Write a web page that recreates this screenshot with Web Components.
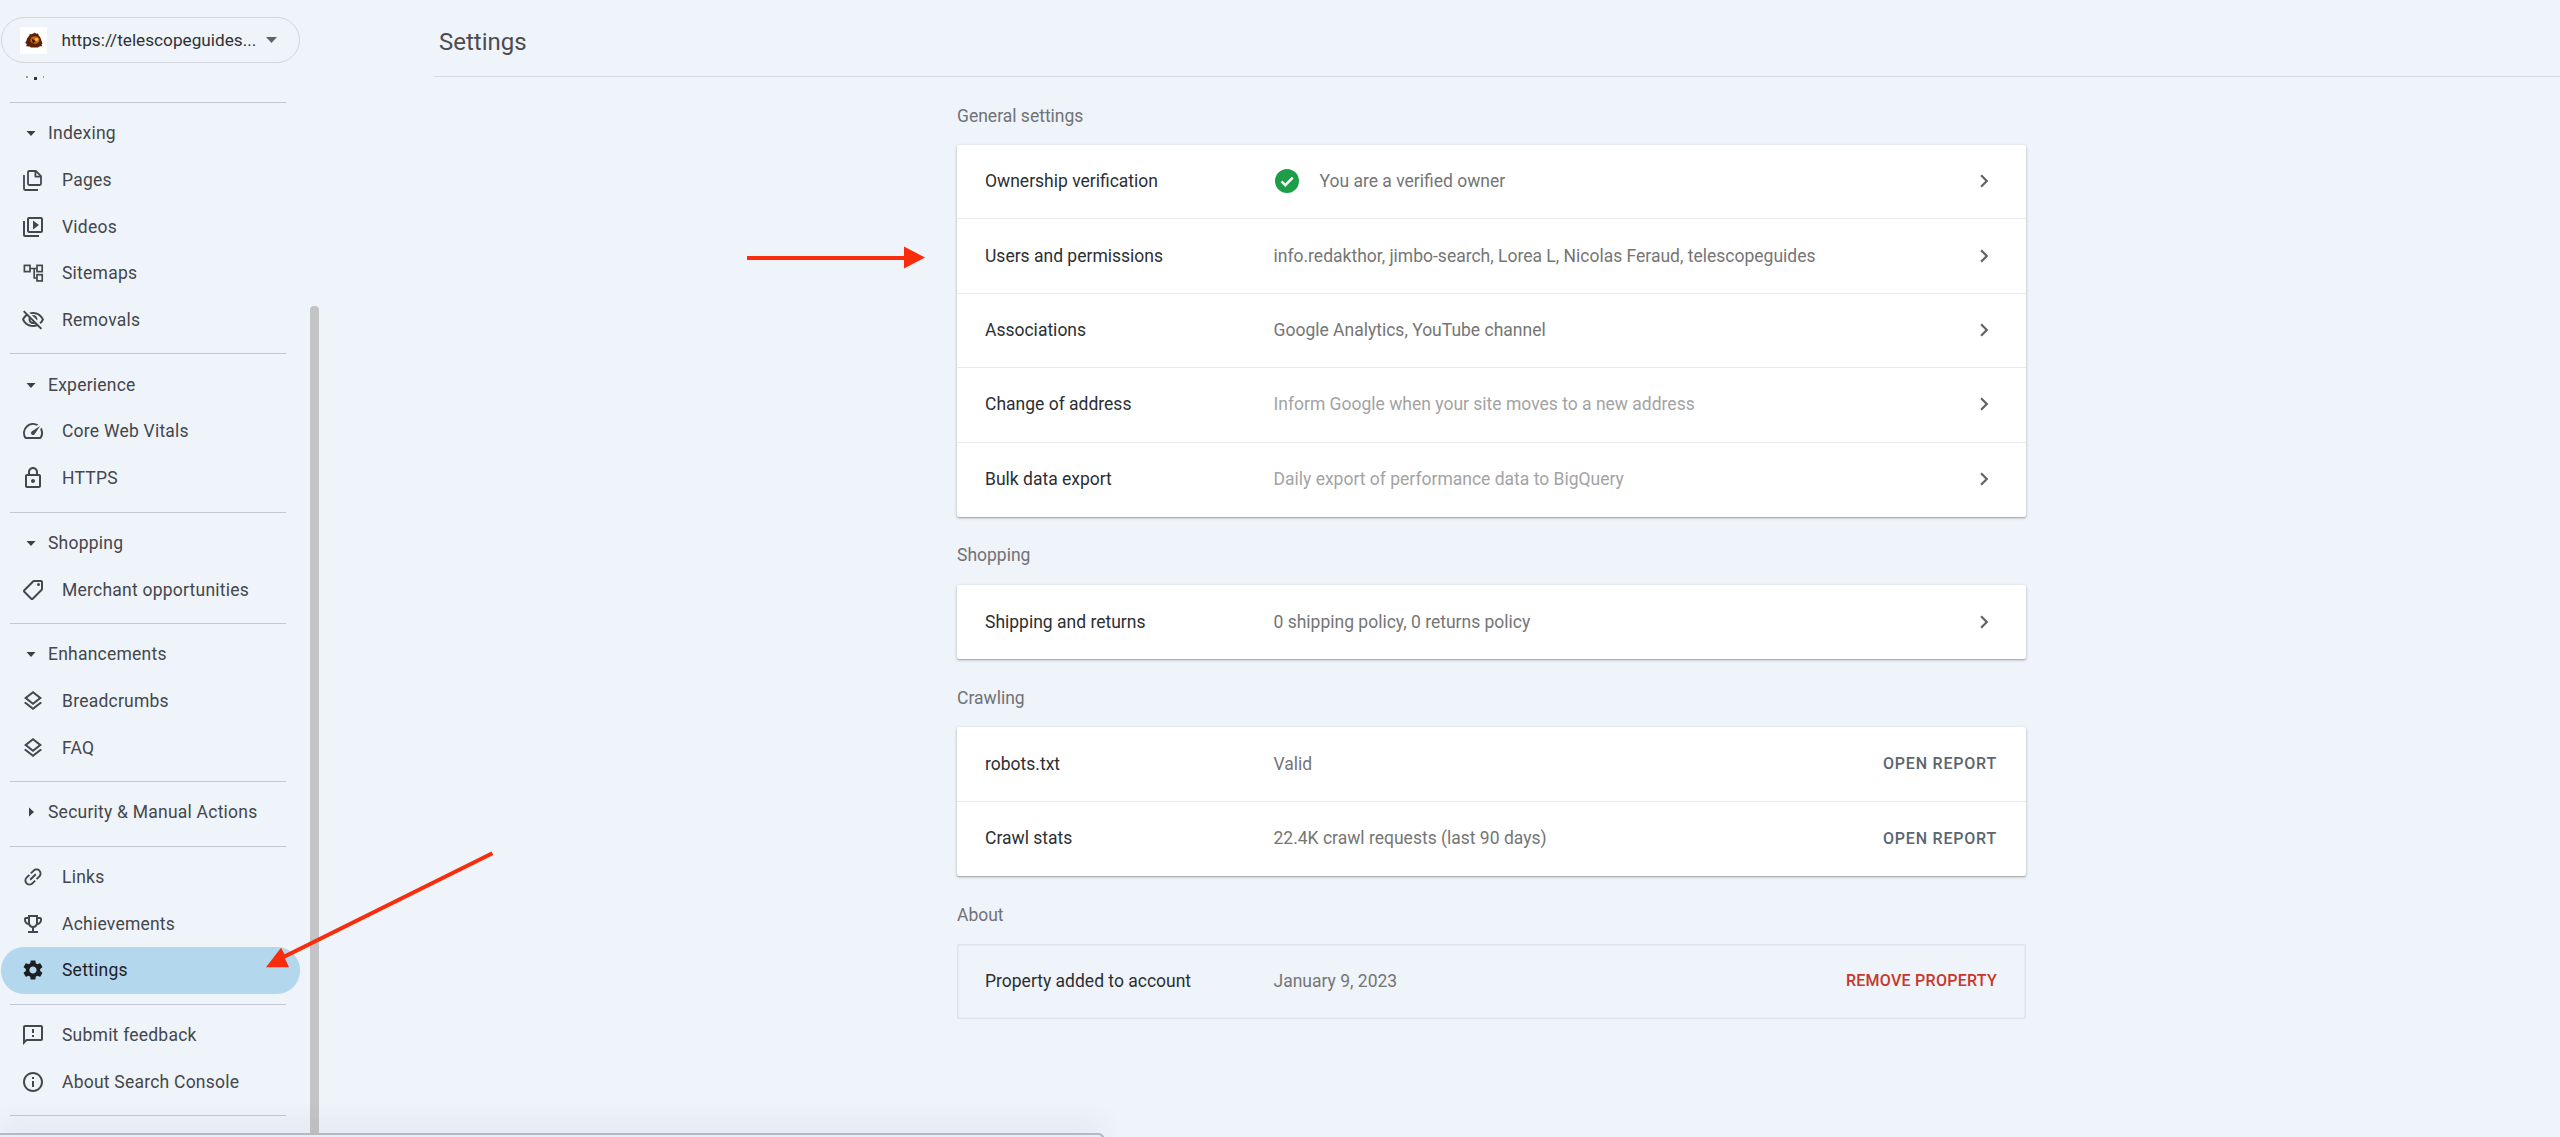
<!DOCTYPE html>
<html><head><meta charset="utf-8"><title>Settings</title>
<style>html,body{margin:0;height:100%;background:#eff3fa;overflow:hidden}</style></head>
<body>
<gsc-app>
  <gsc-property slot="nav" label="https://telescopeguides..."></gsc-property>
  <gsc-nav-clip slot="nav"></gsc-nav-clip>
  <gsc-nav-group slot="nav">
    <gsc-nav-head>Indexing</gsc-nav-head>
    <gsc-nav-item icon="pages">Pages</gsc-nav-item>
    <gsc-nav-item icon="videos">Videos</gsc-nav-item>
    <gsc-nav-item icon="sitemaps">Sitemaps</gsc-nav-item>
    <gsc-nav-item icon="removals">Removals</gsc-nav-item>
  </gsc-nav-group>
  <gsc-nav-group slot="nav">
    <gsc-nav-head>Experience</gsc-nav-head>
    <gsc-nav-item icon="vitals">Core Web Vitals</gsc-nav-item>
    <gsc-nav-item icon="lock">HTTPS</gsc-nav-item>
  </gsc-nav-group>
  <gsc-nav-group slot="nav">
    <gsc-nav-head>Shopping</gsc-nav-head>
    <gsc-nav-item icon="tag">Merchant opportunities</gsc-nav-item>
  </gsc-nav-group>
  <gsc-nav-group slot="nav">
    <gsc-nav-head>Enhancements</gsc-nav-head>
    <gsc-nav-item icon="layers">Breadcrumbs</gsc-nav-item>
    <gsc-nav-item icon="layers">FAQ</gsc-nav-item>
  </gsc-nav-group>
  <gsc-nav-group slot="nav">
    <gsc-nav-head collapsed>Security &amp; Manual Actions</gsc-nav-head>
  </gsc-nav-group>
  <gsc-nav-group slot="nav">
    <gsc-nav-item icon="link">Links</gsc-nav-item>
    <gsc-nav-item icon="trophy">Achievements</gsc-nav-item>
    <gsc-nav-item icon="gear" active>Settings</gsc-nav-item>
  </gsc-nav-group>
  <gsc-nav-group slot="nav">
    <gsc-nav-item icon="feedback">Submit feedback</gsc-nav-item>
    <gsc-nav-item icon="info">About Search Console</gsc-nav-item>
  </gsc-nav-group>
  <gsc-nav-group slot="nav"></gsc-nav-group>

  <gsc-title slot="title">Settings</gsc-title>

  <gsc-section label="General settings">
    <gsc-row name="Ownership verification" chevron verified>You are a verified owner</gsc-row>
    <gsc-row name="Users and permissions" chevron>info.redakthor, jimbo-search, Lorea L, Nicolas Feraud, telescopeguides</gsc-row>
    <gsc-row name="Associations" chevron>Google Analytics, YouTube channel</gsc-row>
    <gsc-row name="Change of address" chevron muted>Inform Google when your site moves to a new address</gsc-row>
    <gsc-row name="Bulk data export" chevron muted last>Daily export of performance data to BigQuery</gsc-row>
  </gsc-section>
  <gsc-section label="Shopping">
    <gsc-row name="Shipping and returns" chevron last>0 shipping policy, 0 returns policy</gsc-row>
  </gsc-section>
  <gsc-section label="Crawling">
    <gsc-row name="robots.txt" action="OPEN REPORT">Valid</gsc-row>
    <gsc-row name="Crawl stats" action="OPEN REPORT" last>22.4K crawl requests (last 90 days)</gsc-row>
  </gsc-section>
  <gsc-section label="About" flat>
    <gsc-row name="Property added to account" action="REMOVE PROPERTY" danger last>January 9, 2023</gsc-row>
  </gsc-section>
</gsc-app>
<script>
const ICONS = {
  pages:'<g fill="none" stroke="currentColor" stroke-width="1.8" stroke-linejoin="round"><path d="M14.8 3H8.2C7.5 3 7 3.5 7 4.2v11.6c0 .7.5 1.2 1.2 1.2h10.6c.7 0 1.2-.5 1.2-1.2V8.2z"/><path d="M14.4 3.2v5.4h5.4"/><path d="M3 7v13.8c0 .7.5 1.2 1.2 1.2H17"/></g>',
  videos:'<path d="M4 6H2v14c0 1.1.9 2 2 2h14v-2H4V6zm16-4H8c-1.1 0-2 .9-2 2v12c0 1.1.9 2 2 2h12c1.1 0 2-.9 2-2V4c0-1.1-.9-2-2-2zm0 14H8V4h12v12zM12 5.5v9l6-4.5z"/>',
  sitemaps:'<g fill="none" stroke="currentColor" stroke-width="1.7"><rect x="3.4" y="4.4" width="5.6" height="6.2"/><rect x="16" y="4.4" width="5.2" height="6.2"/><rect x="16" y="13.7" width="5.2" height="6.2"/><path d="M9 7.5h7M13.2 7.5V17H16"/></g>',
  removals:'<path d="M12 6c3.79 0 7.17 2.13 8.82 5.5-.59 1.22-1.42 2.27-2.41 3.12l1.41 1.41c1.39-1.23 2.49-2.77 3.18-4.53C21.27 7.11 17 4 12 4c-1.27 0-2.49.2-3.64.57l1.65 1.65C10.66 6.09 11.32 6 12 6zm-1.07 1.14L13 9.21c.57.25 1.03.71 1.28 1.28l2.07 2.07c.08-.34.14-.7.14-1.07C16.5 9.01 14.48 7 12 7c-.37 0-.72.05-1.07.14zM2.01 3.87l2.68 2.68C3.06 7.83 1.77 9.53 1 11.5 2.73 15.89 7 19 12 19c1.52 0 2.98-.29 4.32-.82l3.42 3.42 1.41-1.41L3.42 2.45 2.01 3.87zm7.5 7.5l2.61 2.61c-.04.01-.08.02-.12.02-1.38 0-2.5-1.12-2.5-2.5 0-.05.01-.08.01-.13zm-3.4-3.4l1.75 1.75c-.23.55-.36 1.15-.36 1.78 0 2.48 2.02 4.5 4.5 4.5.63 0 1.23-.13 1.77-.36l.98.98c-.88.24-1.8.38-2.75.38-3.79 0-7.17-2.13-8.82-5.5.7-1.43 1.72-2.61 2.93-3.53z"/>',
  vitals:'<path d="M20.38 8.57l-1.23 1.85a8 8 0 0 1-.22 7.58H5.07A8 8 0 0 1 15.58 6.85l1.85-1.23A10 10 0 0 0 3.35 19a2 2 0 0 0 1.72 1h13.85a2 2 0 0 0 1.74-1 10 10 0 0 0-.27-10.44z"/><path d="M10.59 15.41a2 2 0 0 0 2.83 0l5.66-8.49-8.49 5.66a2 2 0 0 0 0 2.83z"/>',
  lock:'<path d="M18 8h-1V6c0-2.76-2.24-5-5-5S7 3.24 7 6v2H6c-1.1 0-2 .9-2 2v10c0 1.1.9 2 2 2h12c1.1 0 2-.9 2-2V10c0-1.1-.9-2-2-2zM9 6c0-1.66 1.34-3 3-3s3 1.34 3 3v2H9V6zm9 14H6V10h12v10zm-6-3c1.1 0 2-.9 2-2s-.9-2-2-2-2 .9-2 2 .9 2 2 2z"/>',
  tag:'<g transform="matrix(-1 0 0 1 24 0)"><path d="M21.41 11.58l-9-9C12.05 2.22 11.55 2 11 2H4c-1.1 0-2 .9-2 2v7c0 .55.22 1.05.59 1.42l9 9c.36.36.86.58 1.41.58s1.05-.22 1.41-.59l7-7c.37-.36.59-.86.59-1.41s-.23-1.06-.59-1.42zM13 20.01L4 11V4h7v-.01l9 9-7 7.02z"/><circle cx="6.5" cy="6.5" r="1.5"/></g>',
  layers:'<path d="M11.99 18.54l-7.37-5.73L3 14.07l9 7 9-7-1.63-1.27-7.38 5.74zM12 16l7.36-5.73L21 9l-9-7-9 7 1.63 1.27L12 16zm0-11.47L17.74 9 12 13.47 6.26 9 12 4.53z"/>',
  link:'<path transform="rotate(-45 12 12)" d="M3.9 12c0-1.71 1.39-3.1 3.1-3.1h4V7H7c-2.76 0-5 2.24-5 5s2.24 5 5 5h4v-1.9H7c-1.71 0-3.1-1.39-3.1-3.1zM8 13h8v-2H8v2zm9-6h-4v1.9h4c1.71 0 3.1 1.39 3.1 3.1s-1.39 3.1-3.1 3.1h-4V17h4c2.76 0 5-2.24 5-5s-2.24-5-5-5z"/>',
  trophy:'<path d="M19 5h-2V3H7v2H5c-1.1 0-2 .9-2 2v1c0 2.55 1.92 4.63 4.39 4.94.63 1.5 1.98 2.63 3.61 2.96V19H7v2h10v-2h-4v-3.1c1.63-.33 2.98-1.46 3.61-2.96C19.08 12.63 21 10.55 21 8V7c0-1.1-.9-2-2-2zM5 8V7h2v3.82C5.84 10.4 5 9.3 5 8zm7 6c-1.65 0-3-1.35-3-3V5h6v6c0 1.65-1.35 3-3 3zm7-6c0 1.3-.84 2.4-2 2.82V7h2v1z"/>',
  gear:'<path d="M19.14 12.94c.04-.3.06-.61.06-.94 0-.32-.02-.64-.07-.94l2.03-1.58c.18-.14.23-.41.12-.61l-1.92-3.32c-.12-.22-.37-.29-.59-.22l-2.39.96c-.5-.38-1.03-.7-1.62-.94l-.36-2.54c-.04-.24-.24-.41-.48-.41h-3.84c-.24 0-.43.17-.47.41l-.36 2.54c-.59.24-1.13.57-1.62.94l-2.39-.96c-.22-.08-.47 0-.59.22L2.74 8.87c-.12.21-.08.47.12.61l2.03 1.58c-.05.3-.09.63-.09.94s.02.64.07.94l-2.03 1.58c-.18.14-.23.41-.12.61l1.92 3.32c.12.22.37.29.59.22l2.39-.96c.5.38 1.03.7 1.62.94l.36 2.54c.05.24.24.41.48.41h3.84c.24 0 .44-.17.47-.41l.36-2.54c.59-.24 1.13-.56 1.62-.94l2.39.96c.22.08.47 0 .59-.22l1.92-3.32c.12-.22.07-.47-.12-.61l-2.01-1.58zM12 15.6c-1.98 0-3.6-1.62-3.6-3.6s1.62-3.6 3.6-3.6 3.6 1.62 3.6 3.6-1.62 3.6-3.6 3.6z"/>',
  feedback:'<path d="M20 2H4c-1.1 0-1.99.9-1.99 2L2 22l4-4h14c1.1 0 2-.9 2-2V4c0-1.1-.9-2-2-2zm0 14H5.17L4 17.17V4h16v12zm-9-4h2v2h-2zm0-6h2v4h-2z"/>',
  info:'<path d="M11 7h2v2h-2zm0 4h2v6h-2zm1-9C6.48 2 2 6.48 2 12s4.48 10 10 10 10-4.48 10-10S17.52 2 12 2zm0 18c-4.41 0-8-3.59-8-8s3.59-8 8-8 8 3.59 8 8-3.59 8-8 8z"/>'
};
const def = (name, css, html) => {
  customElements.define(name, class extends HTMLElement {
    constructor(){ super(); this.attachShadow({mode:'open'}); }
    connectedCallback(){
      const h = typeof html === 'function' ? html(this) : html;
      this.shadowRoot.innerHTML = `<style>${css}</style>${h}`;
    }
  });
};
const NAVFONT = `"Roboto","Liberation Sans",sans-serif`;

def('gsc-app', `
  :host{display:grid;grid-template-columns:434px 1fr;width:2560px;height:1137px;position:relative;overflow:hidden;background:#eff3fa;color:#3c4043}
  nav{position:relative;height:1137px;overflow:hidden;width:434px}
  main{min-width:0}
  .col{width:1069px;margin-left:523px}
  .scrollbar{position:absolute;left:310px;top:306px;width:9px;height:831px;background:#c3c4c6;border-radius:4px 4px 0 0}
  .tray{position:absolute;left:0;top:1133px;width:1105px;height:8px;background:#e7ecfb;border-top:2px solid #b6b9c0;border-right:2px solid #b6b9c0;border-top-right-radius:7px;box-shadow:0 -6px 26px rgba(60,64,67,.16);box-sizing:border-box}
  svg.overlay{position:absolute;left:0;top:0;pointer-events:none}
`, `<nav><slot name="nav"></slot><div class="scrollbar"></div></nav>
  <main><slot name="title"></slot><div class="col"><slot></slot></div></main>
  <div class="tray"></div>
  <svg class="overlay" width="2560" height="1137" viewBox="0 0 2560 1137">
    <path fill="#f92c0c" d="M747 256h157v-9.5l21 11-21 11V260H747z"/>
    <path fill="#f92c0c" d="M491.5 851.5l1.8 3.5L285 958.6l4 8.6H266l15-19.5 3.6 6.6z"/>
  </svg>`);

def('gsc-property', `
  :host{display:block;padding:17px 0 0 1px}
  .pill{box-sizing:border-box;width:299px;height:46px;border:1.5px solid #d3d6dc;border-radius:23px;display:flex;align-items:center;padding-left:18px}
  .fav{width:27px;height:27px;background:#fff;flex:none;display:flex;align-items:center;justify-content:center}
  .fav svg{filter:blur(.35px)}
  .t{margin-left:14.5px;font:400 17.2px ${NAVFONT};color:#2f3134;white-space:nowrap;width:195px}
  svg.c{margin-left:9px;flex:none}
`, el => `<div class="pill"><span class="fav"><svg width="20" height="20" viewBox="0 0 20 20">
    <path fill="#5a1f08" d="M10 2.5c1 0 1.5.8 2.2 1.2l2-.2.4 2.1c1.3 1 2.3 2.6 2.6 4.4l1.3 3.5-1 .8.8 1.8-3 .4-1.3 1H7l-1.5-1-3.3-.2.6-2.2-1.6-1 1.4-2.8c.3-1.8 1.3-3.3 2.7-4.3l.4-2 2 .2c.8-.5 1.5-1.3 2.8-1.3z"/>
    <ellipse cx="10.8" cy="10" rx="4.6" ry="3.8" fill="#c9640f"/><circle cx="12.6" cy="9.4" r="1.7" fill="#f2c14a"/><path fill="#2b1005" d="M7.5 8.5l4 2.5-2.5 2.5z"/></svg></span>
    <span class="t">${el.getAttribute('label')}</span>
    <svg class="c" width="11" height="6" viewBox="0 0 11 6"><path fill="#5f6368" d="M0 0h11L5.5 6z"/></svg></div>`);

def('gsc-nav-clip', `
  :host{display:flex;height:39px;padding-left:26px;align-items:flex-start;gap:3px}
  i{display:block;margin-top:13px;background:#60636a}
  .a{width:1.5px;height:1.5px;background:#9a9ca1}.b{width:3px;height:3px;margin-top:13.5px;margin-left:3px;background:#33363a}.d{margin-left:3px}
`, `<i class="a"></i><i class="b"></i><i class="a d"></i>`);

def('gsc-nav-group', `
  :host{display:block;border-top:1px solid transparent;padding:7px 0 10px;position:relative}
  :host::before{content:"";position:absolute;left:10px;top:-1px;width:276px;height:1px;background:#c5c8d0}
`, `<slot></slot>`);

def('gsc-nav-head', `
  :host{display:flex;align-items:center;height:46.7px;padding-left:26px;font:400 17.5px ${NAVFONT};color:#44474b;letter-spacing:.23px}
  svg{flex:none;margin-right:12px}
`, el => `<svg width="10" height="10" viewBox="0 0 10 10">${el.hasAttribute('collapsed')?'<path fill="#3c4043" d="M3 .5L8 5 3 9.5z"/>':'<path fill="#3c4043" d="M.5 3h9L5 8z"/>'}</svg><slot></slot>`);

def('gsc-nav-item', `
  :host{display:flex;align-items:center;height:46.7px;padding-left:21px;width:278px;font:400 17.5px ${NAVFONT};color:#44474b;letter-spacing:.23px}
  :host([active]){background:#b3d7ed;border-radius:23px;color:#202225;width:299px;margin-left:1px;padding-left:20px;box-sizing:border-box}
  svg{flex:none;width:24px;height:24px;margin-right:17px;fill:currentColor}
  :host([active]) svg{color:#1c1e21}
`, el => `<svg viewBox="0 0 24 24">${ICONS[el.getAttribute('icon')]}</svg><slot></slot>`);

def('gsc-title', `
  :host{display:flex;align-items:center;box-sizing:border-box;height:77px;padding:7px 0 0 5px;border-bottom:1.5px solid #d7dae0;font:400 24px ${NAVFONT};color:#4a4c50}
`, `<slot></slot>`);

def('gsc-section', `
  :host{display:block;padding-top:27.5px}
  h2{margin:0 0 18.5px;font:400 17.5px/22px "Roboto",sans-serif;color:#6f7276}
  .card{background:#fff;border-radius:2px;box-shadow:0 1px 3px rgba(60,64,67,.35),0 1px 1px rgba(60,64,67,.2)}
  :host([flat]) .card{background:transparent;box-shadow:inset 0 0 0 1.5px #dfe3ea}
`, el => `<h2>${el.getAttribute('label')}</h2><div class="card"><slot></slot></div>`);

def('gsc-row', `
  :host{display:grid;grid-template-columns:288.5px 1fr auto;align-items:center;box-sizing:border-box;height:74.4px;padding:0 29px 1px 28px;border-bottom:1.5px solid #e8eaed;font:400 17.5px "Roboto",sans-serif;color:#2b2f33}
  :host([last]){border-bottom:0}
  .v{display:flex;align-items:center;color:#757575;white-space:nowrap}
  :host([muted]) .v{color:#a3a3a3}
  .ck{margin:0 21px 0 1px;flex:none}
  .chev{fill:#5f6368;display:block;margin-right:.3px}
  .act{font:500 16px "Roboto",sans-serif;letter-spacing:.8px;color:#5a6670}
  :host([danger]) .act{color:#c5382c;letter-spacing:.27px}
`, el => `<span class="n">${el.getAttribute('name')}</span>
  <span class="v">${el.hasAttribute('verified')?'<svg class="ck" width="24" height="24" viewBox="0 0 24 24"><circle cx="12" cy="12" r="12" fill="#1e9e48"/><path fill="none" stroke="#fff" stroke-width="2.4" d="M6.5 12.4l3.8 3.8 7.4-7.6"/></svg>':''}<slot></slot></span>
  ${el.hasAttribute('chevron')?'<svg class="chev" width="26" height="26" viewBox="0 0 24 24"><path d="M10 6L8.59 7.41 13.17 12l-4.58 4.59L10 18l6-6z"/></svg>':`<span class="act">${el.getAttribute('action')}</span>`}`);
</script>
</body></html>
